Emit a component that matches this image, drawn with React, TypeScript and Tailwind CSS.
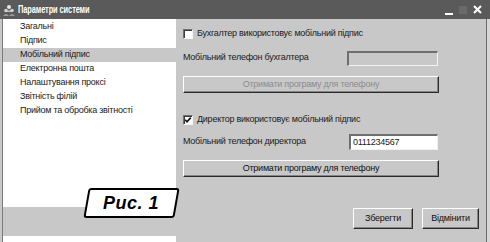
import React from 'react';

const font = { fontFamily: '"Liberation Sans", Arial, sans-serif' };

const items = [
  'Загальні',
  'Підпис',
  'Мобільний підпис',
  'Електронна пошта',
  'Налаштування проксі',
  'Звітність філій',
  'Прийом та обробка звітності',
];

function Checkbox({ checked }: { checked?: boolean }) {
  return (
    <div className="relative w-[10px] h-[10px] bg-white border-t-[1px] border-l-[1px] border-t-[#6e6e6e] border-l-[#6e6e6e] border-b-[1px] border-r-[1px] border-b-[#f4f4f4] border-r-[#f4f4f4] shadow-[inset_1px_1px_0_#3c3c3c]">
      {checked && (
        <svg viewBox="0 0 8 8" className="absolute left-[0px] top-[0px] w-[8px] h-[8px]">
          <path d="M1.2 3.8 L3 5.8 L6.8 1.6" stroke="#111" strokeWidth="1.6" fill="none" />
        </svg>
      )}
    </div>
  );
}

function ClassicButton({ children, disabled, className = '' }: { children: React.ReactNode; disabled?: boolean; className?: string }) {
  return (
    <div
      className={`flex items-center justify-center bg-[#c8c8c8] border-t border-l border-t-white border-l-white border-b border-r border-b-[#2a2a2a] border-r-[#2a2a2a] shadow-[inset_-1px_-1px_0_#868686] text-[9px] ${
        disabled ? 'text-[#8c8c8c]' : 'text-[#111]'
      } ${className}`}
    >
      {children}
    </div>
  );
}

export default function App() {
  return (
    <div className="relative w-[490px] h-[242px] overflow-hidden bg-[#c8c8c8] flex flex-col tracking-[-0.25px]" style={font}>
      {/* title bar */}
      <div className="h-[19px] bg-[#5a5a5a] flex items-center pl-[3px] pr-[8px]">
        <svg viewBox="0 0 12 12" className="w-[12px] h-[12px]">
          <circle cx="6" cy="3" r="2" fill="#e6e6e6" />
          <path d="M3 8 Q6 4.5 9 8 Z" fill="#bdbdbd" />
          <circle cx="3" cy="6.5" r="1.8" fill="#d0d0d0" />
          <circle cx="9" cy="6.5" r="1.8" fill="#d0d0d0" />
          <path d="M0 12 Q3 8 6 12 Z M6 12 Q9 8 12 12 Z" fill="#9a9a9a" />
        </svg>
        <span className="ml-[3px] inline-block origin-left scale-x-[0.74] text-[10px] font-bold text-white tracking-[-0.1px] whitespace-nowrap">
          Параметри системи
        </span>
        <div className="ml-auto flex items-center gap-[6px]">
          <div className="w-[8px] h-[2px] bg-white mt-[9px]" />
          <div className="w-[8px] h-[8px] bg-[#6a6a6a]" />
          <svg viewBox="0 0 9 9" className="w-[9px] h-[9px]">
            <path d="M1 1 L8 8 M8 1 L1 8" stroke="#fff" strokeWidth="2" />
          </svg>
        </div>
      </div>

      <div className="flex flex-1">
        {/* left list */}
        <div className="w-[176px] flex pl-[2px]">
          <div className="w-[1px] bg-[#7a7a7a]" />
          <div className="flex-1 flex flex-col">
            <div className="h-[188px] bg-white pt-[1px]">
              {items.map((item, i) => (
                <div
                  key={item}
                  className={`h-[14px] flex items-center pl-[17px] text-[9px] text-[#1a1a1a] ${
                    i === 2 ? 'bg-[#c8c8c8]' : ''
                  }`}
                >
                  {item}
                </div>
              ))}
            </div>
            <div className="h-[29px]" />
            <div className="flex-1 bg-white" />
          </div>
        </div>

        {/* right settings */}
        <div className="flex-1 flex flex-col pl-[7px] pr-[7px] pt-[10px] text-[9px] text-[#1a1a1a]">
          <div className="h-[10px] flex items-center gap-[4px]">
            <Checkbox />
            <span>Бухгалтер використовує мобільний підпис</span>
          </div>
          <div className="mt-[12px] h-[15px] flex items-center">
            <span className="w-[164px] -mt-[2px]">Мобільний телефон бухгалтера</span>
            <div className="w-[91px] h-[15px] bg-[#c8c8c8] border-t-2 border-l-2 border-t-[#6e6e6e] border-l-[#6e6e6e] border-b border-r border-b-[#f2f2f2] border-r-[#f2f2f2]" />
          </div>
          <ClassicButton disabled className="mt-[10px] w-[256px] h-[17px]">
            Отримати програму для телефону
          </ClassicButton>

          <div className="mt-[22px] h-[10px] flex items-center gap-[4px]">
            <Checkbox checked />
            <span>Директор використовує мобільний підпис</span>
          </div>
          <div className="mt-[9px] h-[16px] flex items-center">
            <span className="w-[166px]">Мобільний телефон директора</span>
            <div className="w-[89px] h-[16px] bg-white border-t-2 border-l-2 border-t-[#6e6e6e] border-l-[#6e6e6e] border-b border-r border-b-[#f2f2f2] border-r-[#f2f2f2] flex items-center pl-[2px] text-[9px]">
              0111234567
            </div>
          </div>
          <ClassicButton className="mt-[10px] w-[256px] h-[17px]">Отримати програму для телефону</ClassicButton>

          <div className="mt-[31px] flex justify-end gap-[9px]">
            <ClassicButton className="w-[60px] h-[21px]">Зберегти</ClassicButton>
            <ClassicButton className="w-[57px] h-[21px]">Відмінити</ClassicButton>
          </div>
        </div>
        <div className="w-[1px] bg-[#6a6a6a]" />
        <div className="w-[3px] bg-[#d6d6d6]" />
      </div>

      {/* figure caption */}
      <div className="absolute left-[86px] top-[188px] w-[91px] h-[30px] -skew-x-[10deg] bg-white border-2 border-black rounded-[3px] flex items-center justify-center">
        <span className="skew-x-[10deg] text-[18px] font-bold italic text-black tracking-[0.5px]">Рис. 1</span>
      </div>
    </div>
  );
}
